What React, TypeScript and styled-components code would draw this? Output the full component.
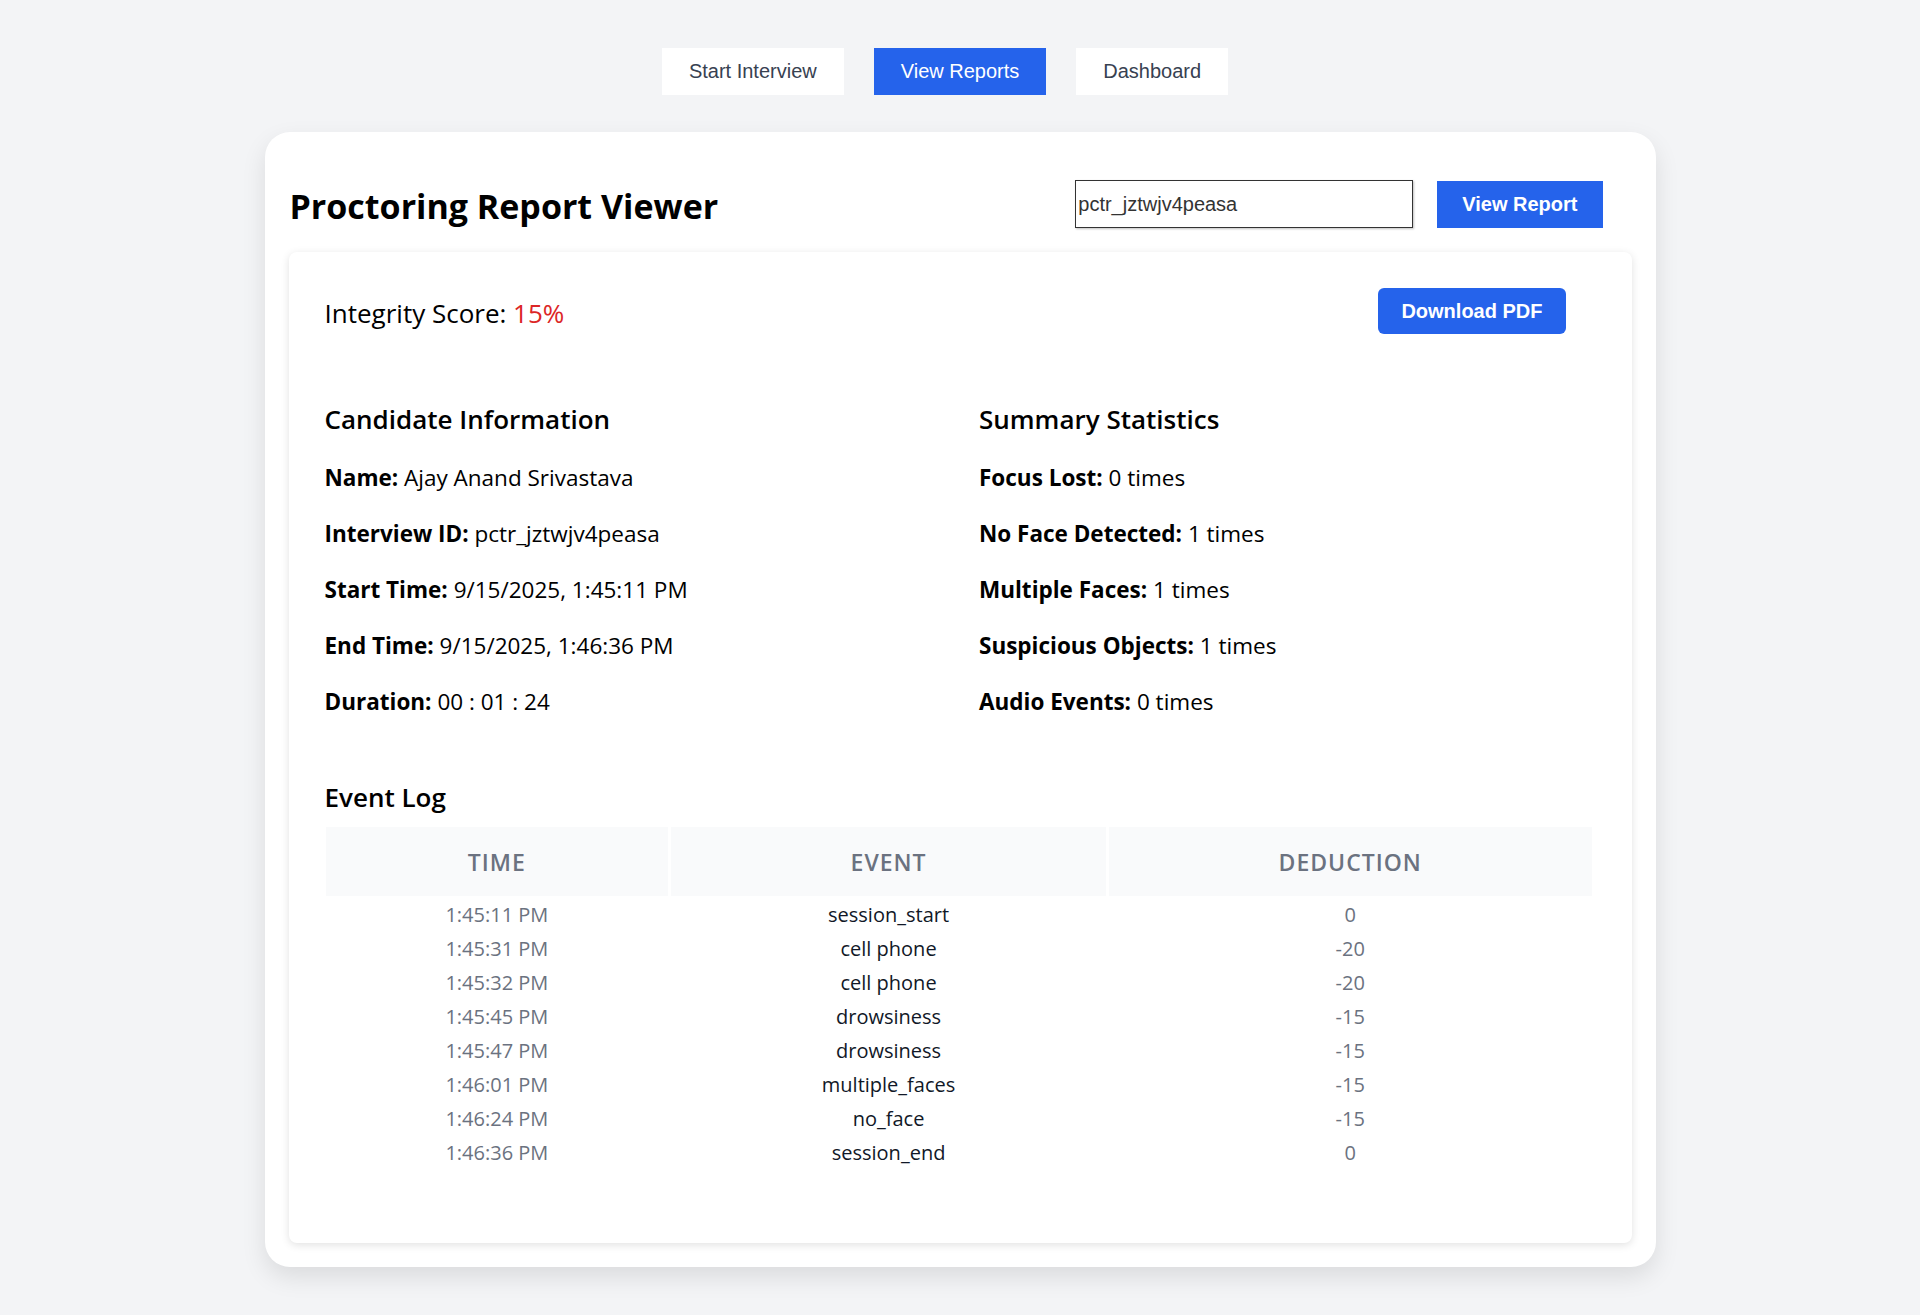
import React from "react";
import styled, { createGlobalStyle } from "styled-components";

const GlobalStyle = createGlobalStyle`
  html, body {
    margin: 0;
    padding: 0;
    background: #f3f4f6;
  }
  body {
    font-family: "Segoe UI", "Open Sans", "Noto Sans", sans-serif;
    color: #000;
  }
  * { box-sizing: border-box; }
`;

const Page = styled.div`
  min-height: 1315px;
  background: #f3f4f6;
  padding-top: 48px;
  display: flex;
  flex-direction: column;
  align-items: center;
`;

const Nav = styled.nav`
  display: flex;
  gap: 30px;
  justify-content: center;
  padding-right: 30px;
`;

const NavButton = styled.button<{ $active?: boolean }>`
  height: 47px;
  padding: 0 27px;
  border: none;
  border-radius: 0;
  font-family: "Liberation Sans", Arial, sans-serif;
  font-size: 20px;
  background: ${(p) => (p.$active ? "#2563eb" : "#ffffff")};
  color: ${(p) => (p.$active ? "#ffffff" : "#374151")};
  cursor: pointer;
`;

const OuterCard = styled.div`
  margin-top: 37px;
  width: 1391px;
  background: #fff;
  border-radius: 25px;
  padding: 24px;
  box-shadow: 0 10px 25px rgba(0, 0, 0, 0.1);
`;

const HeaderRow = styled.div`
  display: flex;
  align-items: center;
  justify-content: space-between;
  height: 48px;
  margin: 24px 0;
  padding: 0 29px 0 1px;
`;

const Title = styled.h2`
  margin: 0;
  font-size: 34px;
  line-height: 44px;
  font-weight: 700;
  color: #000;
  position: relative;
  top: 2px;
`;

const SearchGroup = styled.div`
  display: flex;
  align-items: center;
  gap: 24px;
`;

const IdInput = styled.input`
  width: 338px;
  height: 48px;
  padding: 0 2px;
  font-family: "Liberation Sans", Arial, sans-serif;
  font-size: 20px;
  color: #333;
  border: 1px solid #333;
  box-shadow: 1px 1px 2px rgba(0, 0, 0, 0.25);
  outline: none;
`;

const PrimaryButton = styled.button<{ $rounded?: boolean }>`
  height: ${(p) => (p.$rounded ? "46px" : "47px")};
  padding: 0 ${(p) => (p.$rounded ? "23px" : "25px")};
  border: none;
  border-radius: ${(p) => (p.$rounded ? "6px" : "0")};
  background: #2563eb;
  color: #fff;
  font-family: "Liberation Sans", Arial, sans-serif;
  font-size: 20px;
  font-weight: 700;
  cursor: pointer;
`;

const ReportCard = styled.div`
  background: #fff;
  border-radius: 8px;
  box-shadow: 0 2px 8px rgba(0, 0, 0, 0.12);
  padding: 36px 36px 72px 36px;
`;

const ScoreRow = styled.div`
  display: flex;
  align-items: center;
  justify-content: space-between;
  height: 46px;
  padding-right: 30px;
`;

const ScoreText = styled.div`
  font-size: 26px;
  font-weight: 500;
  line-height: 34px;
  color: #000;
  position: relative;
  top: 2px;
`;

const ScoreValue = styled.span`
  color: #dc2626;
`;

const InfoGrid = styled.div`
  display: grid;
  grid-template-columns: 1fr 1fr;
  column-gap: 38px;
  margin-top: 68px;
`;

const Section = styled.section`
  display: flex;
  flex-direction: column;
`;

const SectionTitle = styled.h3`
  margin: 0 0 28px 0;
  font-size: 26px;
  font-weight: 600;
  line-height: 34px;
  color: #000;
`;

const InfoLine = styled.p`
  margin: 0;
  height: 56px;
  font-size: 22.5px;
  line-height: 28px;
  color: #000;
`;

const Label = styled.strong`
  font-weight: 700;
`;

const LogTitle = styled(SectionTitle)`
  margin: 36px 0 10px 0;
`;

const Table = styled.table`
  width: calc(100% + 1px);
  margin-left: -2px;
  border-collapse: separate;
  border-spacing: 3px;
  table-layout: fixed;
`;

const HeadCell = styled.th<{ $w: string }>`
  width: ${(p) => p.$w};
  height: 69px;
  background: #f9fafb;
  color: #6b7280;
  font-size: 23px;
  font-weight: 600;
  letter-spacing: 1px;
  text-transform: uppercase;
  text-align: center;
`;

const Cell = styled.td<{ $tone: "muted" | "strong" }>`
  height: 31px;
  padding: 0;
  text-align: center;
  font-size: 20px;
  line-height: 31px;
  color: ${(p) => (p.$tone === "muted" ? "#6b7280" : "#111827")};
`;

const candidate = [
  ["Name:", "Ajay Anand Srivastava"],
  ["Interview ID:", "pctr_jztwjv4peasa"],
  ["Start Time:", "9/15/2025, 1:45:11 PM"],
  ["End Time:", "9/15/2025, 1:46:36 PM"],
  ["Duration:", "00 : 01 : 24"],
];

const summary = [
  ["Focus Lost:", "0 times"],
  ["No Face Detected:", "1 times"],
  ["Multiple Faces:", "1 times"],
  ["Suspicious Objects:", "1 times"],
  ["Audio Events:", "0 times"],
];

const events = [
  ["1:45:11 PM", "session_start", "0"],
  ["1:45:31 PM", "cell phone", "-20"],
  ["1:45:32 PM", "cell phone", "-20"],
  ["1:45:45 PM", "drowsiness", "-15"],
  ["1:45:47 PM", "drowsiness", "-15"],
  ["1:46:01 PM", "multiple_faces", "-15"],
  ["1:46:24 PM", "no_face", "-15"],
  ["1:46:36 PM", "session_end", "0"],
];

export default function App() {
  return (
    <>
      <GlobalStyle />
      <Page>
        <Nav>
          <NavButton>Start Interview</NavButton>
          <NavButton $active>View Reports</NavButton>
          <NavButton>Dashboard</NavButton>
        </Nav>
        <OuterCard>
          <HeaderRow>
            <Title>Proctoring Report Viewer</Title>
            <SearchGroup>
              <IdInput defaultValue="pctr_jztwjv4peasa" />
              <PrimaryButton>View Report</PrimaryButton>
            </SearchGroup>
          </HeaderRow>
          <ReportCard>
            <ScoreRow>
              <ScoreText>
                Integrity Score: <ScoreValue>15%</ScoreValue>
              </ScoreText>
              <PrimaryButton $rounded>Download PDF</PrimaryButton>
            </ScoreRow>
            <InfoGrid>
              <Section>
                <SectionTitle>Candidate Information</SectionTitle>
                {candidate.map(([k, v]) => (
                  <InfoLine key={k}>
                    <Label>{k}</Label> {v}
                  </InfoLine>
                ))}
              </Section>
              <Section>
                <SectionTitle>Summary Statistics</SectionTitle>
                {summary.map(([k, v]) => (
                  <InfoLine key={k}>
                    <Label>{k}</Label> {v}
                  </InfoLine>
                ))}
              </Section>
            </InfoGrid>
            <LogTitle>Event Log</LogTitle>
            <Table>
              <thead>
                <tr>
                  <HeadCell $w="27.2%">Time</HeadCell>
                  <HeadCell $w="34.5%">Event</HeadCell>
                  <HeadCell $w="38.3%">Deduction</HeadCell>
                </tr>
              </thead>
              <tbody>
                {events.map(([t, e, d], i) => (
                  <tr key={i}>
                    <Cell $tone="muted">{t}</Cell>
                    <Cell $tone="strong">{e}</Cell>
                    <Cell $tone="muted">{d}</Cell>
                  </tr>
                ))}
              </tbody>
            </Table>
          </ReportCard>
        </OuterCard>
      </Page>
    </>
  );
}
